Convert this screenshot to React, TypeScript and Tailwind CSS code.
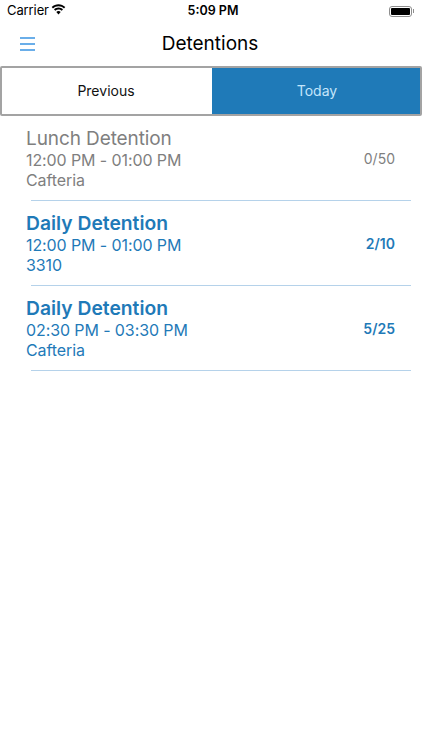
const rows = [
  { title: "Lunch Detention", time: "12:00 PM - 01:00 PM", room: "Cafteria", count: "0/50", active: false },
  { title: "Daily Detention", time: "12:00 PM - 01:00 PM", room: "3310", count: "2/10", active: true },
  { title: "Daily Detention", time: "02:30 PM - 03:30 PM", room: "Cafteria", count: "5/25", active: true },
];

const StatusBar = () => (
  <div className="relative flex h-[22px] items-center justify-between pl-[7px] pr-[7px] text-[13px] text-black">
    <div className="flex items-center gap-[2px]">
      <span className="tracking-[-0.1px]">Carrier</span>
      <svg className="-mt-[3px]" width="15" height="11" viewBox="0 0 15 11" fill="#000">
        <path d="M7.5 2.2c2.1 0 4 .8 5.5 2.2l1.300-1.300C12.400 1.200 10 .2 7.500.2S2.600 1.200.7 2.900L2 4.400c1.500-1.400 3.400-2.200 5.500-2.200z" />
        <path d="M7.5 5.500c1.200 0 2.300.5 3.200 1.300l1.300-1.300C10.800 4.300 9.200 3.600 7.500 3.600S4.200 4.300 3 5.500l1.300 1.300c.9-.8 2-1.300 3.200-1.300z" />
        <path d="M7.500 7.100c-.8 0-1.600.3-2.200.9l2.200 2.500 2.200-2.500c-.6-.6-1.400-.9-2.200-.9z" />
      </svg>
    </div>
    <span className="absolute left-[4px] right-0 text-center text-[12.5px] font-semibold">5:09 PM</span>
    <div className="mr-[1px] flex items-center">
      <div className="h-[11px] w-[23px] rounded-[3px] border border-[#8e8e8e] p-[1px]">
        <div className="h-full w-full rounded-[1px] bg-black" />
      </div>
      <div className="ml-[1px] h-[4px] w-[1px] bg-[#8e8e8e]" />
    </div>
  </div>
);

const NavBar = () => (
  <div className="relative flex h-[44px] items-center justify-center">
    <div className="absolute left-[20px] top-[15px] flex w-[15px] flex-col gap-[4px]">
      <div className="h-[2px] bg-[#6aaee9]" />
      <div className="h-[2px] bg-[#6aaee9]" />
      <div className="h-[2px] bg-[#6aaee9]" />
    </div>
    <span className="pr-[2px] text-[19px] text-black">Detentions</span>
  </div>
);

const Tabs = () => (
  <div className="flex h-[50px] rounded-[2px] border-2 border-[#a3a3a3] text-[14px]">
    <div className="flex w-[210px] items-center justify-center bg-white pr-[2px] pb-[2px] text-[#111]">Previous</div>
    <div className="flex flex-1 items-center justify-center bg-[#1f7ab8] pl-[2px] pb-[2px] text-[#c4e5fb]">Today</div>
  </div>
);

const Row = ({ title, time, room, count, active }: (typeof rows)[number]) => (
  <div className="ml-[31px] mr-[11px] flex h-[85px] items-center justify-between border-b border-[#b5d2ea] pr-[16px]">
    <div className={`-ml-[5px] flex flex-col ${active ? "text-[#1f7ab8]" : "text-[#7f7f7f]"}`}>
      <span
        className={
          active
            ? "text-[19.3px] leading-[24px] font-semibold"
            : "pt-[1px] text-[19px] leading-[23px] tracking-[-0.1px]"
        }
      >
        {title}
      </span>
      <span className="text-[16px] leading-[20px] tracking-[-0.1px]">{time}</span>
      <span className="text-[16px] leading-[20px] tracking-[-0.1px]">{room}</span>
    </div>
    <span className={`text-[14px] ${active ? "font-semibold text-[#1f7ab8]" : "text-[#7f7f7f]"}`}>{count}</span>
  </div>
);

export default function App() {
  return (
    <div className="h-[750px] w-[422px] bg-white font-['Inter','Liberation_Sans',sans-serif]">
      <StatusBar />
      <NavBar />
      <Tabs />
      <div>
        {rows.map((r, i) => (
          <Row key={i} {...r} />
        ))}
      </div>
    </div>
  );
}
